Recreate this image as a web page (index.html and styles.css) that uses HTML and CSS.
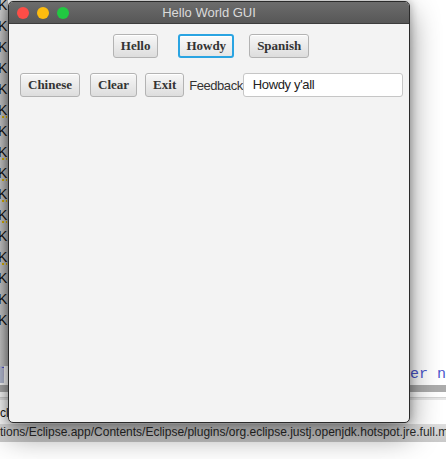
FILE: index.html
```html
<!DOCTYPE html>
<html>
<head>
<meta charset="utf-8">
<link rel="stylesheet" href="styles.css">
</head>
<body>
<div class="desktop">
  <div class="editor">
    <div class="gutter">
      <div class="marks">
        <div class="mark">K</div>
        <div class="mark">K</div>
        <div class="mark">K</div>
        <div class="mark">K</div>
        <div class="mark">K</div>
        <div class="mark warn">K</div>
        <div class="mark">K</div>
        <div class="mark warn">K</div>
        <div class="mark warn">K</div>
        <div class="mark warn">K</div>
        <div class="mark warn">K</div>
        <div class="mark">K</div>
        <div class="mark warn">K</div>
        <div class="mark">K</div>
        <div class="mark">K</div>
        <div class="mark">K</div>
      </div>
    </div>
    <div class="code"></div>
  </div>
  <div class="codeline">
    <span class="code-left">l</span>
    <span class="code-right">er na</span>
  </div>
  <div class="hbar"></div>
  <div class="sep"></div>
  <div class="console">cla</div>
  <div class="status">tions/Eclipse.app/Contents/Eclipse/plugins/org.eclipse.justj.openjdk.hotspot.jre.full.macosx</div>
  <div class="rest"></div>
</div>

<div class="window">
  <div class="titlebar">
    <div class="lights">
      <span class="light red"></span>
      <span class="light yellow"></span>
      <span class="light green"></span>
    </div>
    <div class="title">Hello World GUI</div>
    <div></div>
  </div>
  <div class="content">
    <div class="row row1">
      <button class="btn hello">Hello</button>
      <button class="btn focused">Howdy</button>
      <button class="btn">Spanish</button>
    </div>
    <div class="row row2">
      <button class="btn">Chinese</button>
      <button class="btn clear">Clear</button>
      <button class="btn exit">Exit</button>
      <span class="label">Feedback</span>
      <div class="field">Howdy y'all</div>
    </div>
  </div>
</div>
</body>
</html>
```

FILE: styles.css
```css
html, body {
  margin: 0;
  padding: 0;
}
body {
  width: 446px;
  height: 459px;
  overflow: hidden;
  position: relative;
  background: #fff;
  font-family: "Liberation Sans", Arial, sans-serif;
}

/* background (Eclipse behind) */
.desktop {
  display: flex;
  flex-direction: column;
  height: 459px;
}
.editor {
  display: flex;
  height: 366px;
}
.gutter {
  width: 8px;
  background: linear-gradient(to right, #cdcdcd, #b8b8b8);
  overflow: hidden;
}
.marks {
  margin-top: -5px;
}
.mark {
  height: 21px;
  line-height: 21px;
  font-size: 14px;
  color: #111;
  margin-left: -2px;
}
.mark.warn {
  text-decoration: underline dotted #d9b200;
  text-decoration-thickness: 2px;
  text-underline-offset: 1px;
}
.code {
  flex: 1;
  background: #fff;
}
.codeline {
  height: 17px;
  display: flex;
  justify-content: space-between;
  font-family: "Liberation Mono", monospace;
  font-size: 15px;
  line-height: 17px;
  color: #4b56cc;
  background: #fff;
  white-space: nowrap;
  overflow: hidden;
}
.code-left {
  background: #b9c0d8;
  width: 4px;
  overflow: hidden;
}
.code-right {
  margin-right: -9px;
}
.hbar {
  height: 7px;
  margin-top: 2px;
  background: #acacac;
}
.sep {
  height: 5px;
  border-bottom: 1px solid #d4d4d4;
  margin-bottom: 2px;
  box-shadow: 0 2px 0 #e6e6e6;
}
.console {
  height: 24px;
  font-size: 12px;
  line-height: 22px;
  padding-top: 2px;
  box-sizing: border-box;
  color: #111;
}
.status {
  height: 18px;
  font-size: 12px;
  line-height: 17px;
  color: #2a2a2a;
  background: linear-gradient(#dedede, #c9c9c9);
  white-space: nowrap;
  overflow: hidden;
}
.rest {
  flex: 1;
  background: #fff;
}

/* window */
.window {
  position: absolute;
  left: 8px;
  top: 1px;
  width: 402px;
  height: 422px;
  box-sizing: border-box;
  border: 1px solid #2a2a2a;
  border-radius: 5px;
  overflow: hidden;
  display: flex;
  flex-direction: column;
  background: #f3f3f3;
  box-shadow: 0 12px 30px rgba(0, 0, 0, 0.45), 0 0 10px rgba(0, 0, 0, 0.3);
}
.titlebar {
  height: 21px;
  flex: none;
  display: grid;
  grid-template-columns: 1fr auto 1fr;
  align-items: center;
  background: linear-gradient(#6c6c6c, #575757);
  border-bottom: 1px solid #3c3c3c;
}
.lights {
  display: flex;
  gap: 8px;
  padding-left: 8px;
}
.light {
  width: 12px;
  height: 12px;
  border-radius: 50%;
}
.red { background: #fd4d47; }
.yellow { background: #fdbc0e; }
.green { background: #21c841; }
.title {
  font-size: 13px;
  color: #dadada;
}

.content {
  flex: 1;
  padding-top: 10px;
  display: flex;
  flex-direction: column;
  gap: 15px;
}
.row {
  display: flex;
  align-items: center;
}
.row1 {
  justify-content: center;
  gap: 15px;
  padding-left: 4px;
}
.row1 .hello {
  margin-right: 5px;
}
.row2 {
  padding: 0 6px 0 11px;
}
.row2 .btn {
  margin-right: 10px;
}
.row2 .clear {
  margin-right: 8px;
}
.row2 .exit {
  margin-right: 5px;
}
.btn {
  height: 24px;
  box-sizing: border-box;
  margin: 0;
  padding: 0 7px;
  font-family: "Liberation Serif", "Times New Roman", serif;
  font-weight: bold;
  font-size: 13px;
  color: #333;
  background: linear-gradient(#f7f7f7, #dddddd);
  border: 1px solid #b3b3b3;
  border-radius: 3px;
  box-shadow: inset 0 1px 0 #ffffff;
}
.btn.focused {
  border: 2px solid #2aa4e2;
  padding: 0 6px;
  background: linear-gradient(#fafafa, #e6e6e6);
}
.label {
  font-size: 13px;
  letter-spacing: -0.45px;
  color: #333;
}
.field {
  flex: 1;
  height: 24px;
  box-sizing: border-box;
  margin-left: 0;
  padding-left: 9px;
  background: #fff;
  border: 1px solid #c6c6c6;
  border-radius: 3px;
  font-size: 13px;
  letter-spacing: -0.35px;
  line-height: 22px;
  color: #222;
}
```
